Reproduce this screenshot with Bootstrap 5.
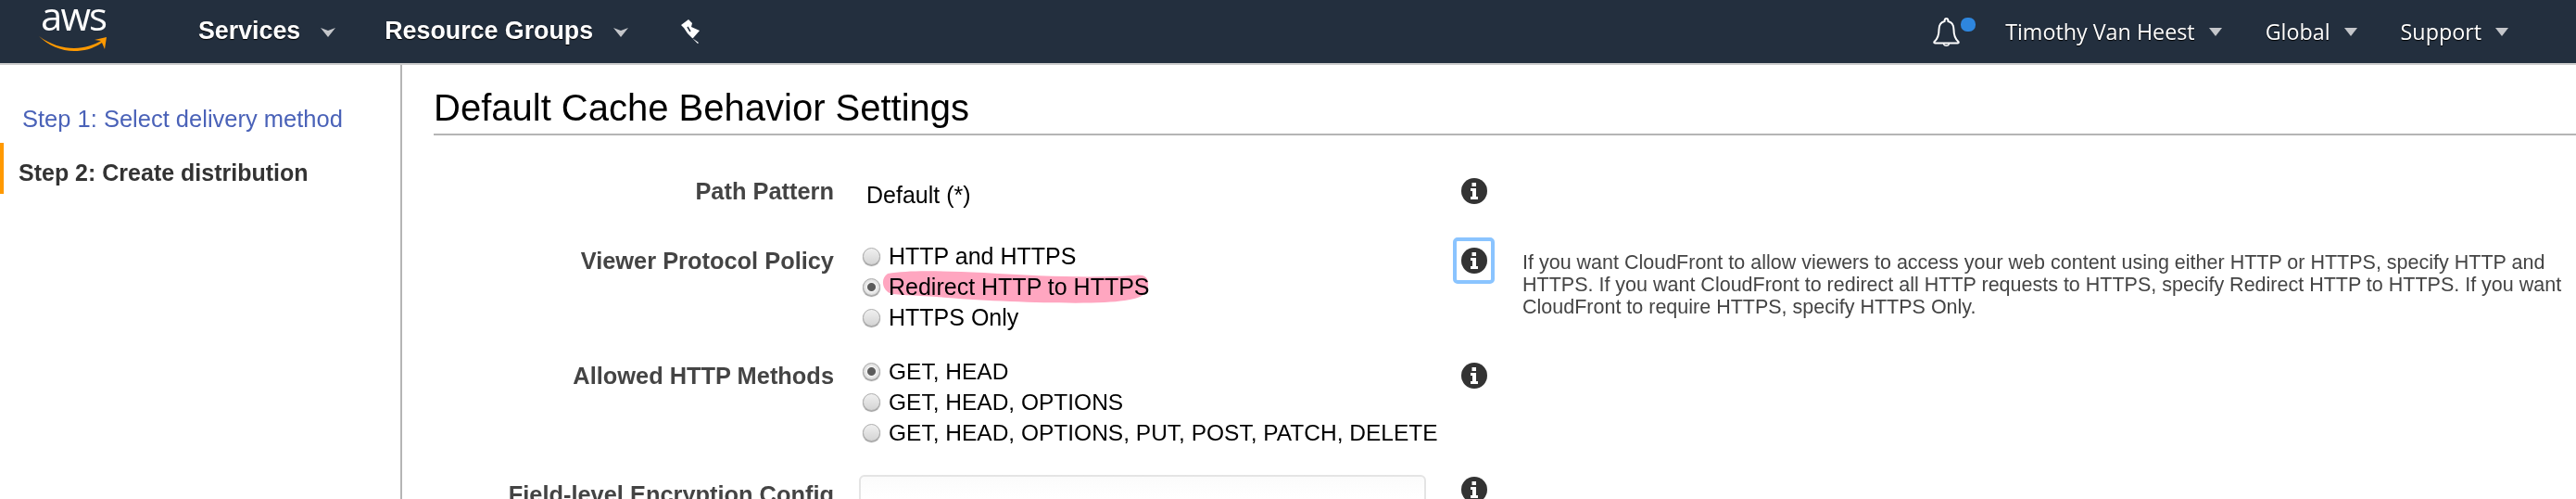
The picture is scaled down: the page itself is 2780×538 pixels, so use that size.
<!DOCTYPE html>
<html lang="en">
<head>
    <meta charset="UTF-8">
    <meta name="viewport" content="width=device-width, initial-scale=1.0">
    <title>Create Distribution - CloudFront</title>
    <link href="https://cdn.jsdelivr.net/npm/bootstrap@5.3.0/dist/css/bootstrap.min.css" rel="stylesheet">
    <style>
        html, body { height: 538px; overflow: hidden; }
        body { font-family: "Liberation Sans", Arial, sans-serif; color: #000; background: #fff; }

        .aws-bar { height: 70px; background: #232f3e; border-bottom: 2px solid #ccc; padding: 0; flex-wrap: nowrap; }
        .aws-logo { width: 74px; margin-left: 42px; margin-right: 98px; align-self: flex-start; margin-top: 2px; }
        .aws-word { color: #fff; font-size: 42px; line-height: 30px; letter-spacing: -2px; text-align: center; font-family: "Open Sans", sans-serif; height: 30px; }
        .aws-smile { display: block; width: 74px; height: 18px; margin-top: 6px; }
        .bar-main { color: #fff; font-size: 26.8px; font-weight: 700; text-shadow: 0 1px 1px #000; margin-top: -2px; }
        .bar-side { color: #fff; font-size: 23.3px; font-family: "Open Sans", sans-serif; text-shadow: 0 1px 1px #000; }
        .caret-down { width: 16px; height: 10px; fill: #c4c6ca; margin-left: 22px; margin-top: 3px; }
        .caret-small { width: 14px; height: 9px; fill: #c4c6ca; margin-left: 15px; }
        .group-gap { margin-left: 53px; }
        .pin-gap { margin-left: 57px; margin-top: 2px; }
        .bar-dot { width: 16px; height: 15px; background: #2e86de; border-radius: 7px; margin-top: -16px; margin-left: 1px; }
        .bar-gap { margin-left: 47px; }
        .timothy { margin-left: 32px; }
        .end-caret { margin-right: 73px; }

        .step-side { width: 434px; height: 468px; border-right: 2px solid #b5b5b5; padding-top: 40px; flex-shrink: 0; }
        .step-link { font-size: 25.5px; line-height: 36px; color: #4a62b8; padding-left: 24px; }
        .step-now { font-size: 25px; line-height: 45px; padding-top: 10px; font-weight: 700; color: #333; border-left: 4px solid #f90; padding-left: 16px; margin-top: 8px; }

        .behavior { flex-grow: 1; padding-left: 34px; min-width: 0; }
        .behavior-title { font-size: 40px; line-height: 46px; font-weight: 400; color: #000; margin: 23px 0 0; padding-bottom: 5px; border-bottom: 2px solid #b5b5b5; }

        .cfg-row { white-space: nowrap; }
        .cfg-label { width: 432px; text-align: right; font-size: 25.4px; line-height: 33px; font-weight: 700; color: #444; flex-shrink: 0; }
        .cfg-value { width: 612px; margin-left: 27px; font-size: 25px; line-height: 33px; flex-shrink: 0; }
        .cfg-info { width: 28px; height: 28px; margin-left: 38px; position: relative; flex-shrink: 0; }
        .cfg-info svg { display: block; width: 28px; height: 28px; }
        .cfg-focus::after { content: ""; position: absolute; top: -11px; left: -9px; right: -8px; bottom: -11px; border: 4px solid #8ac4ff; border-radius: 5px; }
        .cfg-help { margin-left: 38px; font-size: 21.5px; line-height: 24px; color: #444; white-space: normal; width: 1128px; padding-top: 11px; flex-shrink: 0; }

        .path-row { margin-top: 44px; }
        .viewer-row { margin-top: 33px; }
        .methods-row { margin-top: 25px; }
        .field-row { margin-top: 29px; }
        .pad-label { padding-top: 5px; }
        .pad-path { padding-left: 8px; padding-top: 4px; }
        .pad-info { margin-top: 7px; }
        .pad-info-top { margin-top: 2px; }
        .methods-list { font-size: 24.5px; }

        .radio-line { display: flex; align-items: center; height: 33px; padding-left: 4px; }
        .radio-line .form-check-input { width: 19px; height: 19px; margin: 0 9px 0 0; flex-shrink: 0; border: 1px solid #b0b0b0; background-color: #e6e6e6; background-image: linear-gradient(#f0f0f0, #d4d4d4); box-shadow: 0 1px 1px #999; }
        .radio-line .form-check-input:checked { background-color: #e6e6e6; border-color: #b0b0b0; background-image: radial-gradient(circle, #5c5c5c 0, #5c5c5c 4px, #f2f2f2 5px, #d8d8d8 9px); background-size: auto; }
        .marked { position: relative; }
        .marker-ink { position: absolute; left: -7px; top: -1px; width: 288px; height: 36px; mix-blend-mode: multiply; fill: #ffa6c0; overflow: visible; }

        .encrypt-box { height: 80px; border: 2px solid #e4e4e4; border-radius: 6px; background: linear-gradient(#fbfbfb, #fff 30%); }
    </style>
</head>
<body>
    <nav class="navbar aws-bar">
        <div class="aws-logo">
            <div class="aws-word">aws</div>
            <svg class="aws-smile" viewBox="0 0 74 18"><path d="M0 1C12 10 26 14 38 14C50 14 60 10 67 6L60 5L73 2L71 15L68 8C58 15 48 17 38 17C24 17 10 11 0 1Z" fill="#f90"/></svg>
        </div>
        <div class="d-flex align-items-center bar-main">
            <span>Services</span>
            <svg class="caret-down" viewBox="0 0 16 10"><path d="M0 0L8 3L16 0L8 10Z"/></svg>
            <span class="group-gap">Resource Groups</span>
            <svg class="caret-down" viewBox="0 0 16 10"><path d="M0 0L8 3L16 0L8 10Z"/></svg>
            <svg class="pin-gap" width="22" height="26" viewBox="0 0 22 26"><path d="M0 6L8 0L12 4L11 8L20 12L13 20L12 20L19 25L18 26L13 21L7 15L3 9Z" fill="#fff"/><path d="M7 8L10 13" stroke="#232f3e" stroke-width="1.5"/></svg>
        </div>
        <div class="d-flex align-items-center bar-side ms-auto">
            <svg width="29" height="31" viewBox="0 0 29 31" fill="none" stroke="#fff" stroke-width="2"><path d="M14.5 1C13 1 12.5 2.5 12.5 4C8 5 6.5 8.5 6.5 13C6.5 19 5 23 1.5 26C1 27 1.5 27.5 2.5 27.5H26.500C27.500 27.500 28 27 27.500 26C24 23 22.500 19 22.500 13C22.500 8.500 21 5 16.500 4C16.500 2.500 16 1 14.500 1Z"/><path d="M11.5 28C12 31 17 31 17.5 28" stroke-width="1.500"/></svg>
            <span class="bar-dot"></span>
            <span class="timothy">Timothy Van Heest</span>
            <svg class="caret-small" viewBox="0 0 14 9"><path d="M0 0H14L7 9Z"/></svg>
            <span class="bar-gap">Global</span>
            <svg class="caret-small" viewBox="0 0 14 9"><path d="M0 0H14L7 9Z"/></svg>
            <span class="bar-gap">Support</span>
            <svg class="caret-small end-caret" viewBox="0 0 14 9"><path d="M0 0H14L7 9Z"/></svg>
        </div>
    </nav>

    <div class="d-flex">
        <aside class="step-side">
            <div class="step-link">Step 1: Select delivery method</div>
            <div class="step-now">Step 2: Create distribution</div>
        </aside>

        <main class="behavior">
            <h2 class="behavior-title">Default Cache Behavior Settings</h2>

            <div class="d-flex cfg-row path-row">
                <div class="cfg-label">Path Pattern</div>
                <div class="cfg-value pad-path">Default (*)</div>
                <div class="cfg-info pad-info-top">
                    <svg viewBox="0 0 28 28"><circle cx="14" cy="14" r="14" fill="#333"/><path d="M11.5 5H16V9H11.5ZM10 11H16V20H18V23H10V20H12V14H10Z" fill="#fff"/></svg>
                </div>
            </div>

            <div class="d-flex cfg-row viewer-row">
                <div class="cfg-label pad-label">Viewer Protocol Policy</div>
                <div class="cfg-value">
                    <div class="radio-line"><input class="form-check-input" type="radio" name="viewer"><span>HTTP and HTTPS</span></div>
                    <div class="radio-line"><input class="form-check-input" type="radio" name="viewer" checked><span class="marked">Redirect HTTP to HTTPS<svg class="marker-ink" viewBox="0 0 288 36" preserveAspectRatio="none"><path d="M6 3C30 -1 60 0 110 2C170 6 230 8 270 5C282 3 288 6 287 16C286 28 275 32 240 34C200 36 120 33 70 29C40 26 18 27 8 24C0 20 -2 8 6 3Z"/></svg></span></div>
                    <div class="radio-line"><input class="form-check-input" type="radio" name="viewer"><span>HTTPS Only</span></div>
                </div>
                <div class="cfg-info cfg-focus pad-info">
                    <svg viewBox="0 0 28 28"><circle cx="14" cy="14" r="14" fill="#333"/><path d="M11.5 5H16V9H11.5ZM10 11H16V20H18V23H10V20H12V14H10Z" fill="#fff"/></svg>
                </div>
                <div class="cfg-help">If you want CloudFront to allow viewers to access your web content using either HTTP or HTTPS, specify HTTP and HTTPS. If you want CloudFront to redirect all HTTP requests to HTTPS, specify Redirect HTTP to HTTPS. If you want CloudFront to require HTTPS, specify HTTPS Only.</div>
            </div>

            <div class="d-flex cfg-row methods-row">
                <div class="cfg-label pad-label">Allowed HTTP Methods</div>
                <div class="cfg-value methods-list">
                    <div class="radio-line"><input class="form-check-input" type="radio" name="methods" checked><span>GET, HEAD</span></div>
                    <div class="radio-line"><input class="form-check-input" type="radio" name="methods"><span>GET, HEAD, OPTIONS</span></div>
                    <div class="radio-line"><input class="form-check-input" type="radio" name="methods"><span>GET, HEAD, OPTIONS, PUT, POST, PATCH, DELETE</span></div>
                </div>
                <div class="cfg-info pad-info">
                    <svg viewBox="0 0 28 28"><circle cx="14" cy="14" r="14" fill="#333"/><path d="M11.5 5H16V9H11.5ZM10 11H16V20H18V23H10V20H12V14H10Z" fill="#fff"/></svg>
                </div>
            </div>

            <div class="d-flex cfg-row field-row">
                <div class="cfg-label pad-label">Field-level Encryption Config</div>
                <div class="cfg-value encrypt-box"></div>
                <div class="cfg-info pad-info-top">
                    <svg viewBox="0 0 28 28"><circle cx="14" cy="14" r="14" fill="#333"/><path d="M11.5 5H16V9H11.5ZM10 11H16V20H18V23H10V20H12V14H10Z" fill="#fff"/></svg>
                </div>
            </div>
        </main>
    </div>

    <script src="https://cdn.jsdelivr.net/npm/bootstrap@5.3.0/dist/js/bootstrap.bundle.min.js"></script>
</body>
</html>
